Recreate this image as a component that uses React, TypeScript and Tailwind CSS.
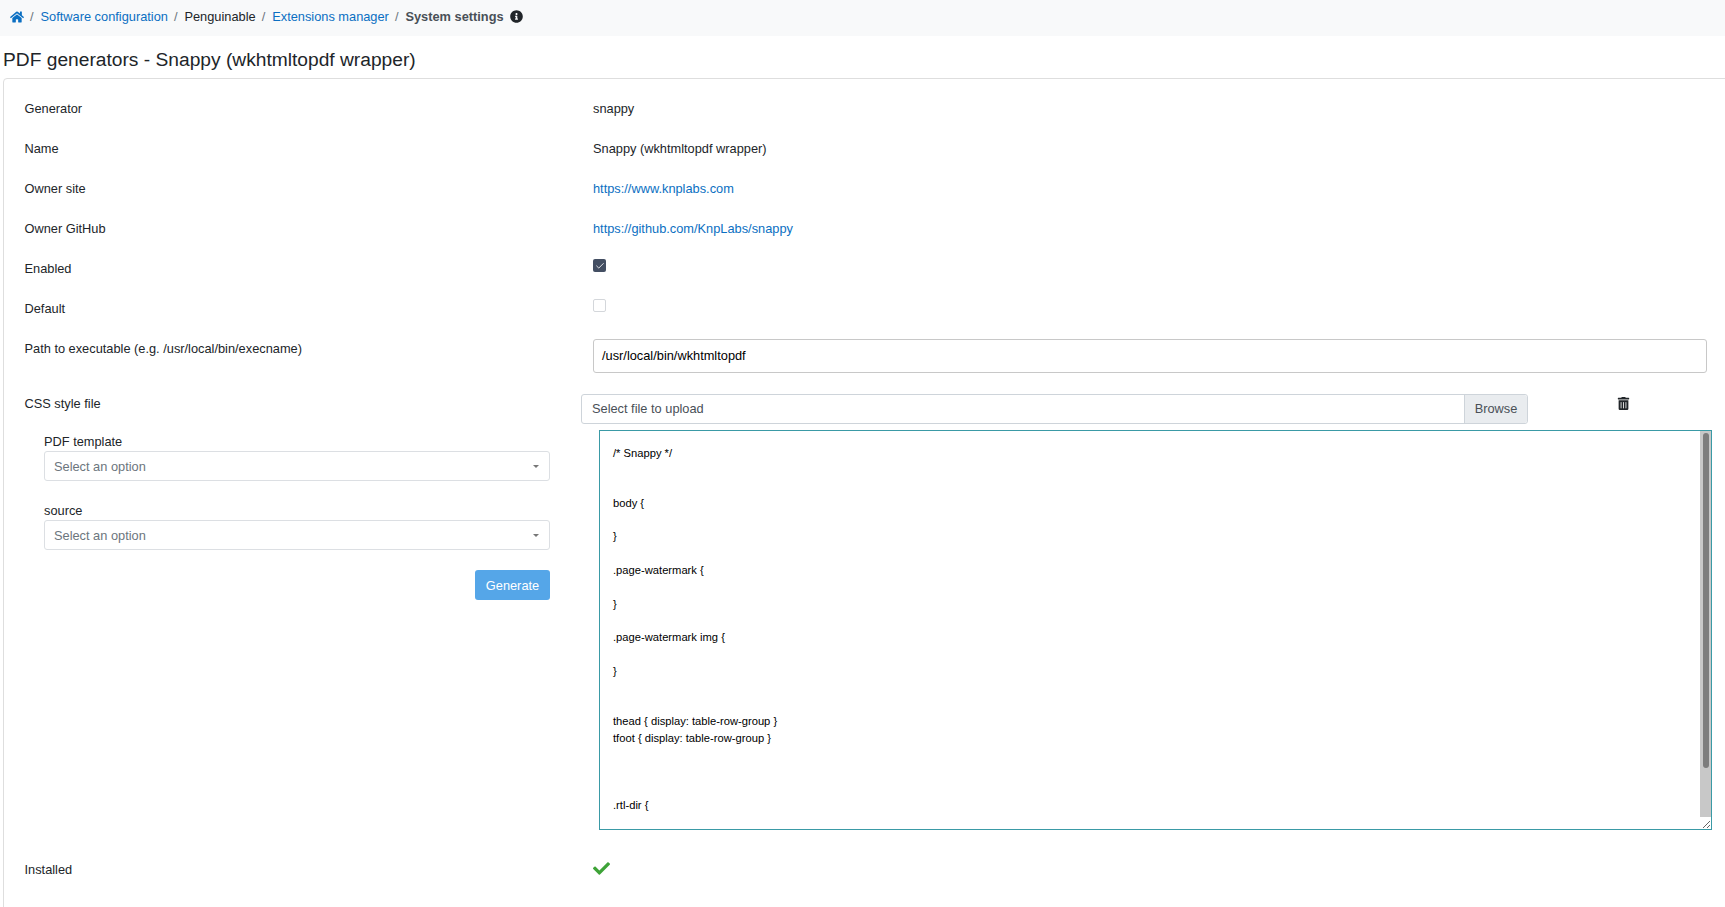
import { Check } from 'lucide-react';
import { FaCheck, FaHome, FaInfoCircle, FaTrashAlt } from 'react-icons/fa';

const CSS_TEXT = `/* Snappy */


body {

}

.page-watermark {

}

.page-watermark img {

}


thead { display: table-row-group }
tfoot { display: table-row-group }



.rtl-dir {

}

`;

function Row({ label, children }: { label: string; children?: React.ReactNode }) {
    return (
        <div className="flex h-10 items-center">
            <div className="w-[568.5px] shrink-0">{label}</div>
            <div>{children}</div>
        </div>
    );
}

function Placeholder({ label }: { label: string }) {
    return (
        <div>
            <div className="h-[14px] leading-[14px] text-[#212529]">{label}</div>
            <div className="mt-[2px] flex h-[30px] items-center justify-between rounded-[3px] border border-[#dcdfe3] pr-[10px] pl-[9px] text-[#6c757d]">
                <span>Select an option</span>
                <span className="border-x-[3px] border-t-[3px] border-x-transparent border-t-[#777]" />
            </div>
        </div>
    );
}

function Sep() {
    return <span className="mr-[7px] ml-[6px] text-[#6c757d]">/</span>;
}

export default function App() {
    return (
        <div className="h-[907px] overflow-hidden bg-white font-['Liberation_Sans',Arial,sans-serif] text-[12.8px] text-[#212529]">
            <nav className="flex h-9 items-center bg-[#f8f9fa] pb-[3px] pl-[10px]">
                <FaHome className="size-[14px] text-[#0b6fc2]" />
                <Sep />
                <a className="text-[#0b6fc2]">Software configuration</a>
                <Sep />
                <span>Penguinable</span>
                <Sep />
                <a className="text-[#0b6fc2]">Extensions manager</a>
                <Sep />
                <b className="text-[#495057]">System settings</b>
                <FaInfoCircle className="ml-[6px] size-[13px] text-[#212529]" />
            </nav>

            <h1 className="mt-[11px] h-[31px] pl-[3px] text-[19.2px] leading-[26px] font-normal">
                PDF generators - Snappy (wkhtmltopdf wrapper)
            </h1>

            {/* the card runs on past the right edge of the window */}
            <section className="-mr-[20px] ml-[3px] h-[900px] rounded-[4px] border border-[#dedede] pt-[10px] pl-[20.5px]">
                <Row label="Generator">snappy</Row>
                <Row label="Name">Snappy (wkhtmltopdf wrapper)</Row>
                <Row label="Owner site">
                    <a className="text-[#0b6fc2]">https://www.knplabs.com</a>
                </Row>
                <Row label="Owner GitHub">
                    <a className="text-[#0b6fc2]">https://github.com/KnpLabs/snappy</a>
                </Row>
                <Row label="Enabled">
                    <span className="mb-[7px] flex size-[13px] items-center justify-center rounded-[2px] bg-[#434e62] text-white">
                        <Check className="size-[10px]" strokeWidth={2} />
                    </span>
                </Row>
                <Row label="Default">
                    <span className="mb-[7px] block size-[13px] rounded-[2px] border border-[#d4d7db] bg-white" />
                </Row>

                <div className="mt-[10px] flex">
                    <div className="w-[568.5px] shrink-0">Path to executable (e.g. /usr/local/bin/execname)</div>
                    <div className="flex h-[34px] w-[1114px] items-center rounded-[3px] border border-[#c8c8c8] pl-2 text-black">
                        /usr/local/bin/wkhtmltopdf
                    </div>
                </div>

                <div className="mt-[21px] flex">
                    <div className="w-[556.5px] shrink-0">
                        <div>CSS style file</div>
                        <div className="mt-[22px] ml-[19.5px] flex w-[506px] flex-col gap-[23px]">
                            <Placeholder label="PDF template" />
                            <Placeholder label="source" />
                            <button className="-mt-[3px] h-[30px] w-[75px] self-end rounded-[3px] bg-[#55a6e8] text-white">
                                Generate
                            </button>
                        </div>
                    </div>
                    <div className="flex-1">
                        <div className="flex h-[36px] items-start">
                            <div className="flex h-[30px] w-[947px] items-center justify-between rounded-[3px] border border-[#ced4da] pl-[10px] text-[#495057]">
                                <span>Select file to upload</span>
                                <span className="flex h-full w-[63px] items-center justify-center rounded-r-[3px] border-l border-[#ced4da] bg-[#e9ecef]">
                                    Browse
                                </span>
                            </div>
                            <FaTrashAlt className="mt-[3px] ml-[89px] size-[13px] text-[#212529]" />
                        </div>
                        <div className="relative ml-[18px] w-[1113px]">
                            <textarea
                                readOnly
                                value={CSS_TEXT}
                                className="block h-[400px] w-full resize overflow-hidden border border-[#3a9aa6] pt-[13.5px] pl-[13px] text-[11.2px] leading-[16.8px] text-black outline-none"
                            />
                            {/* the scrollbar is hidden in the headless browser, so it is drawn */}
                            <div className="absolute top-[1px] right-[1px] h-[386px] w-[11px] bg-[#c8c8c8] pt-[2px] pl-[3px]">
                                <div className="h-[335px] w-[6px] rounded-[3px] bg-[#7d7d7d]" />
                            </div>
                        </div>
                    </div>
                </div>

                <div className="mt-[20px] flex h-10 items-center">
                    <div className="w-[568.5px] shrink-0">Installed</div>
                    <FaCheck className="mb-[4px] size-[17px] text-[#3ea338]" />
                </div>
            </section>
        </div>
    );
}
